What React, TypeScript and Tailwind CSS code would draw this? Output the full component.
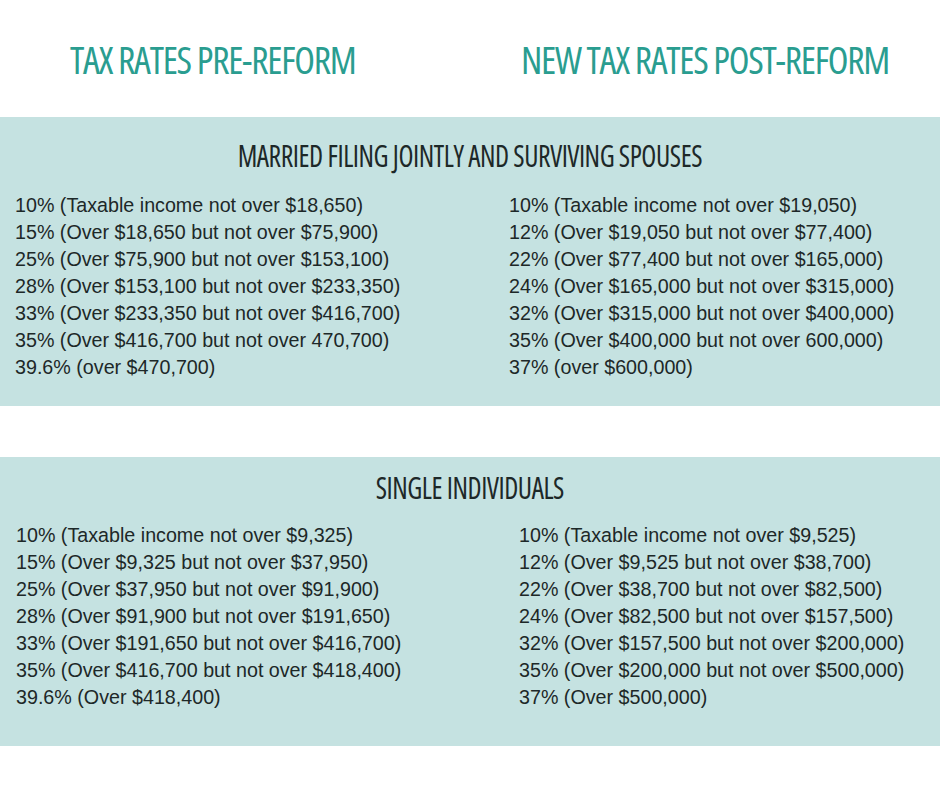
const married = {
  pre: [
    "10% (Taxable income not over $18,650)",
    "15% (Over $18,650 but not over $75,900)",
    "25% (Over $75,900 but not over $153,100)",
    "28% (Over $153,100 but not over $233,350)",
    "33% (Over $233,350 but not over $416,700)",
    "35% (Over $416,700 but not over 470,700)",
    "39.6% (over $470,700)",
  ],
  post: [
    "10% (Taxable income not over $19,050)",
    "12% (Over $19,050 but not over $77,400)",
    "22% (Over $77,400 but not over $165,000)",
    "24% (Over $165,000 but not over $315,000)",
    "32% (Over $315,000 but not over $400,000)",
    "35% (Over $400,000 but not over 600,000)",
    "37% (over $600,000)",
  ],
};

const single = {
  pre: [
    "10% (Taxable income not over $9,325)",
    "15% (Over $9,325 but not over $37,950)",
    "25% (Over $37,950 but not over $91,900)",
    "28% (Over $91,900 but not over $191,650)",
    "33% (Over $191,650 but not over $416,700)",
    "35% (Over $416,700 but not over $418,400)",
    "39.6% (Over $418,400)",
  ],
  post: [
    "10% (Taxable income not over $9,525)",
    "12% (Over $9,525 but not over $38,700)",
    "22% (Over $38,700 but not over $82,500)",
    "24% (Over $82,500 but not over $157,500)",
    "32% (Over $157,500 but not over $200,000)",
    "35% (Over $200,000 but not over $500,000)",
    "37% (Over $500,000)",
  ],
};

function RateList({ items, className }: { items: string[]; className: string }) {
  return (
    <ul className={className}>
      {items.map((item) => (
        <li className="h-[27px] leading-[27px] whitespace-nowrap" key={item}>{item}</li>
      ))}
    </ul>
  );
}

function PanelTitle({ children }: { children: string }) {
  return (
    <h2 className="text-center font-['Open_Sans',sans-serif] text-[31px] leading-[31px] font-medium tracking-[-0.5px] [font-stretch:75%]">
      <span className="inline-block scale-x-[0.89] whitespace-nowrap">{children}</span>
    </h2>
  );
}

export default function App() {
  return (
    <div className="w-[940px] h-[788px] bg-white font-['Liberation_Sans',Arial,sans-serif] text-[#1d2828]">
      <header className="grid h-[117px] grid-cols-2 pt-[40px] font-['Open_Sans',sans-serif] text-[38px] leading-[38px] tracking-[-1.25px] text-[#2a9d90] [font-stretch:75%]">
        <h1 className="pl-[70px]">TAX RATES PRE-REFORM</h1>
        <h1 className="text-center">NEW TAX RATES POST-REFORM</h1>
      </header>

      <section className="h-[289px] bg-[#c5e2e1] pt-[23px]">
        <PanelTitle>MARRIED FILING JOINTLY AND SURVIVING SPOUSES</PanelTitle>
        <div className="mt-[21px] grid grid-cols-2 text-[19.7px]">
          <RateList items={married.pre} className="pl-[15px]" />
          <RateList items={married.post} className="pl-[39px]" />
        </div>
      </section>

      <div className="h-[51px]" />

      <section className="h-[289px] bg-[#c5e2e1] pt-[15px]">
        <PanelTitle>SINGLE INDIVIDUALS</PanelTitle>
        <div className="mt-[19px] grid grid-cols-2 text-[19.7px]">
          <RateList items={single.pre} className="pl-[16px]" />
          <RateList items={single.post} className="pl-[49px]" />
        </div>
      </section>
    </div>
  );
}
